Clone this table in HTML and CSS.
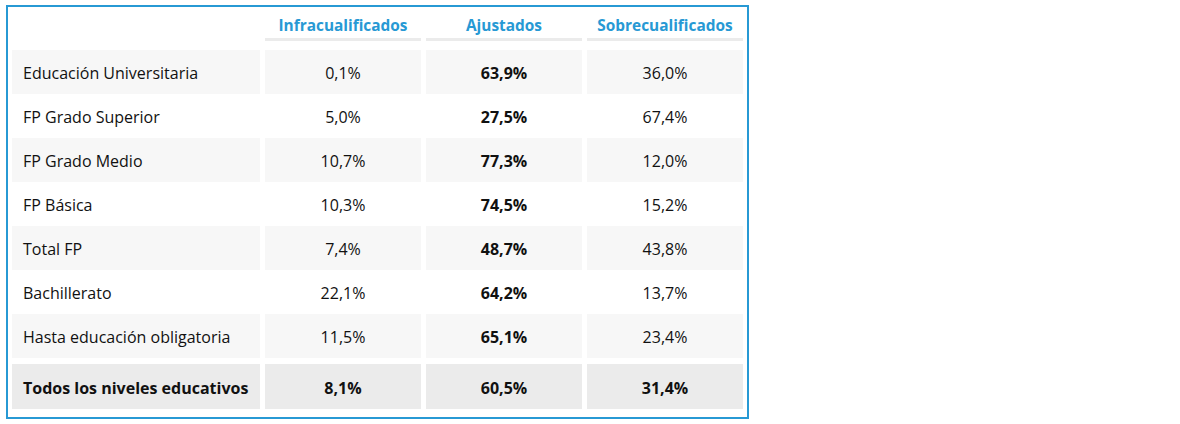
FILE: index.html
```html
<!DOCTYPE html>
<html lang="es">
<head>
<meta charset="utf-8">
<title>Tabla</title>
<link rel="stylesheet" href="styles.css">
</head>
<body>
<div class="card">
  <div class="grid">
    <div class="hd hd-empty"></div>
    <div class="hd">Infracualificados</div>
    <div class="hd">Ajustados</div>
    <div class="hd">Sobrecualificados</div>

    <div class="cell label odd">Educación Universitaria</div>
    <div class="cell odd">0,1%</div>
    <div class="cell odd strong">63,9%</div>
    <div class="cell odd">36,0%</div>

    <div class="cell label">FP Grado Superior</div>
    <div class="cell">5,0%</div>
    <div class="cell strong">27,5%</div>
    <div class="cell">67,4%</div>

    <div class="cell label odd">FP Grado Medio</div>
    <div class="cell odd">10,7%</div>
    <div class="cell odd strong">77,3%</div>
    <div class="cell odd">12,0%</div>

    <div class="cell label">FP Básica</div>
    <div class="cell">10,3%</div>
    <div class="cell strong">74,5%</div>
    <div class="cell">15,2%</div>

    <div class="cell label odd">Total FP</div>
    <div class="cell odd">7,4%</div>
    <div class="cell odd strong">48,7%</div>
    <div class="cell odd">43,8%</div>

    <div class="cell label">Bachillerato</div>
    <div class="cell">22,1%</div>
    <div class="cell strong">64,2%</div>
    <div class="cell">13,7%</div>

    <div class="cell label odd">Hasta educación obligatoria</div>
    <div class="cell odd">11,5%</div>
    <div class="cell odd strong">65,1%</div>
    <div class="cell odd">23,4%</div>

    <div class="cell label total">Todos los niveles educativos</div>
    <div class="cell total">8,1%</div>
    <div class="cell total">60,5%</div>
    <div class="cell total">31,4%</div>
  </div>
</div>
</body>
</html>
```

FILE: styles.css
```css
html, body {
  margin: 0;
  padding: 0;
  background: #ffffff;
}

body {
  font-family: "Open Sans", "Noto Sans", "Liberation Sans", sans-serif;
  color: #111111;
}

.card {
  margin: 5px 0 0 6px;
  border: 2px solid #2799d4;
  padding: 0 4px 8px 4px;
  box-sizing: content-box;
  width: 731px;
}

.grid {
  display: grid;
  grid-template-columns: 248px 156px 156px 156px;
  column-gap: 5px;
}

.hd {
  height: 34px;
  border-bottom: 3px solid #ebebeb;
  margin-bottom: 9px;
  color: #2799d4;
  font-weight: 700;
  font-size: 15.4px;
  display: flex;
  align-items: flex-end;
  justify-content: center;
  padding-bottom: 2px;
  box-sizing: border-box;
}

.hd-empty {
  border-bottom-color: transparent;
}

.cell {
  height: 44px;
  display: flex;
  align-items: center;
  justify-content: center;
  font-size: 16px;
  padding-top: 2px;
  box-sizing: border-box;
}

.label {
  justify-content: flex-start;
  padding-left: 11px;
}

.odd {
  background: #f7f7f7;
}

.strong {
  font-weight: 700;
}

.total {
  background: #ebebeb;
  font-weight: 700;
  margin-top: 6px;
  height: 45px;
}
```
